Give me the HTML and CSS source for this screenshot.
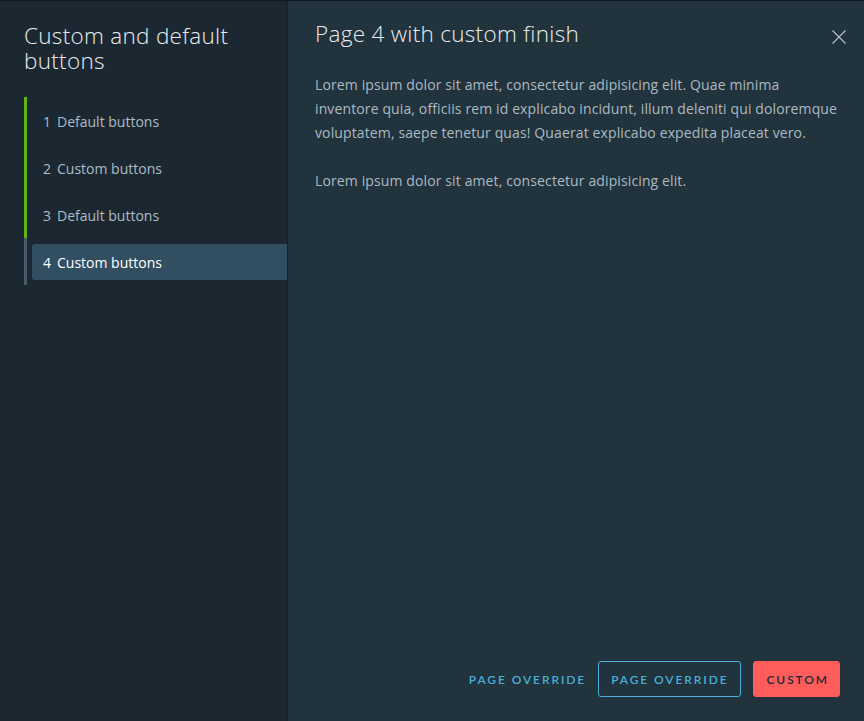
FILE: index.html
```html
<!DOCTYPE html>
<html lang="en">
<head>
<meta charset="utf-8">
<title>Custom and default buttons</title>
<link rel="stylesheet" href="styles.css">
</head>
<body>
<div class="wizard">
  <aside class="sidebar">
    <h2 class="wizard-title">Custom and default buttons</h2>
    <ol class="steps">
      <li class="step done"><a class="step-link"><span class="num">1</span>Default buttons</a></li>
      <li class="step done"><a class="step-link"><span class="num">2</span>Custom buttons</a></li>
      <li class="step done"><a class="step-link"><span class="num">3</span>Default buttons</a></li>
      <li class="step current"><a class="step-link"><span class="num">4</span>Custom buttons</a></li>
    </ol>
  </aside>
  <main class="content">
    <header class="content-header">
      <h3 class="page-title">Page 4 with custom finish</h3>
      <button class="close" aria-label="Close">
        <svg width="14" height="14" viewBox="0 0 14 14"><path d="M0.5 0.5 L13.5 13.5 M13.5 0.5 L0.5 13.5" stroke="#b3c0c8" stroke-width="1.2" fill="none"/></svg>
      </button>
    </header>
    <div class="body">
      <p>Lorem ipsum dolor sit amet, consectetur adipisicing elit. Quae minima inventore quia, officiis rem id explicabo incidunt, illum deleniti qui doloremque voluptatem, saepe tenetur quas! Quaerat explicabo expedita placeat vero.</p>
      <p>Lorem ipsum dolor sit amet, consectetur adipisicing elit.</p>
    </div>
    <footer class="footer">
      <button class="btn btn-flat">Page Override</button>
      <button class="btn btn-outline">Page Override</button>
      <button class="btn btn-danger">Custom</button>
    </footer>
  </main>
</div>
</body>
</html>
```

FILE: styles.css
```css
* { box-sizing: border-box; }
html, body { margin: 0; padding: 0; height: 100%; }
body {
  background: #21333c;
  font-family: "Open Sans", "Noto Sans", sans-serif;
  color: #acbac3;
}
.wizard {
  display: flex;
  height: 721px;
  border-top: 1px solid #11191e;
}
.sidebar {
  width: 288px;
  flex: none;
  background: #1c2831;
  border-right: 1px solid #172127;
  padding: 22px 0 0 24px;
}
.wizard-title {
  margin: 0;
  font-weight: 300;
  font-size: 22.5px;
  line-height: 25px;
  letter-spacing: 0.3px;
  color: #e9ecef;
}
.steps {
  list-style: none;
  margin: 24px 0 0;
  padding: 0;
}
.step {
  border-left: 3px solid #495a67;
  padding: 6px 0 5px 5px;
}
.step.done { border-left-color: #60b515; }
.step-link {
  display: flex;
  align-items: center;
  height: 36px;
  padding: 0 0 0 11px;
  font-size: 14px;
  color: #adbbc4;
  border-radius: 3px 0 0 3px;
}
.num { margin-right: 6px; }
.step.current .step-link {
  background: #324f62;
  color: #ffffff;
}
.content {
  flex: 1;
  display: flex;
  flex-direction: column;
  padding: 0 24px 24px 27px;
}
.content-header {
  display: flex;
  align-items: flex-start;
  justify-content: space-between;
  padding-top: 19px;
}
.page-title {
  margin: 0;
  font-weight: 300;
  font-size: 22.5px;
  line-height: 28px;
  letter-spacing: 0.3px;
  color: #e9ecef;
}
.close {
  background: none;
  border: 0;
  padding: 0;
  margin: 10px -6px 0 0;
  width: 14px;
  height: 14px;
  line-height: 0;
  cursor: pointer;
}
.body {
  margin-top: 25px;
  flex: 1;
}
.body p {
  margin: 0 0 24px;
  font-size: 14px;
  line-height: 24px;
  letter-spacing: 0.12px;
  color: #acbac3;
}
.footer {
  display: flex;
  justify-content: flex-end;
  align-items: center;
  gap: 12px;
}
.btn {
  height: 36px;
  padding: 0 12px;
  font-family: Lato, "Noto Sans", sans-serif;
  font-size: 12px;
  font-weight: 600;
  letter-spacing: 1.9px;
  text-transform: uppercase;
  border-radius: 3px;
  border: 1px solid transparent;
  background: none;
  cursor: pointer;
}
.btn-flat { color: #49afd9; padding: 0; border: 0; margin-right: 0; }
.btn-outline { color: #49afd9; border-color: #49afd9; }
.btn-danger {
  background: #ff5c5c;
  border-color: #ff5c5c;
  color: #1b2a32;
  padding: 0 10px 0 12px;
}
```
